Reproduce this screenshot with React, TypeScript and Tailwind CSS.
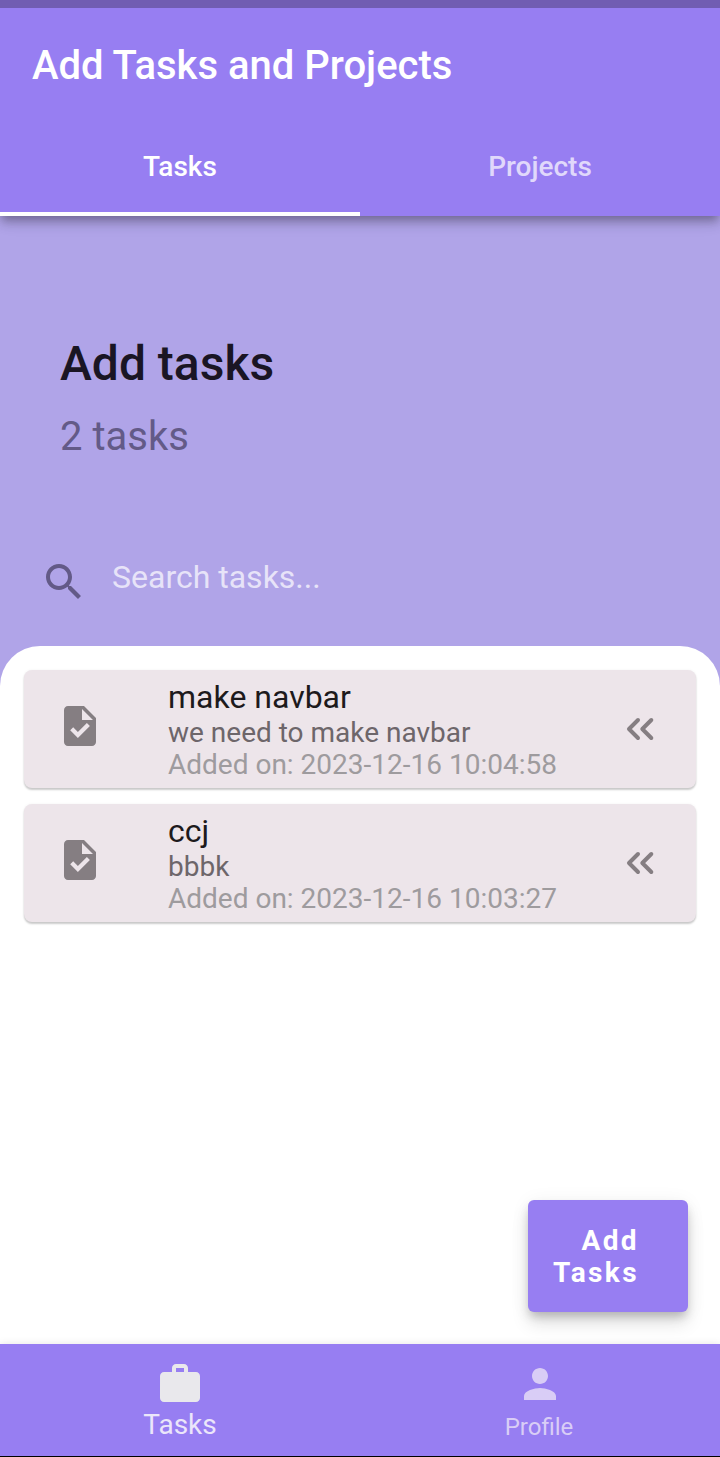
const PATHS = {
  search:
    "M15.5 14h-.79l-.28-.27C15.41 12.59 16 11.11 16 9.5 16 5.91 13.09 3 9.5 3S3 5.91 3 9.5 5.91 16 9.5 16c1.61 0 3.09-.59 4.23-1.57l.27.28v.79l5 4.99L20.49 19l-4.99-5zm-6 0C7.01 14 5 11.99 5 9.5S7.01 5 9.5 5 14 7.01 14 9.5 11.99 14 9.5 14z",
  task:
    "M14 2H6c-1.1 0-1.99.9-1.99 2L4 20c0 1.1.89 2 1.99 2H18c1.1 0 2-.9 2-2V8l-6-6zm-3.06 16L7.1 14.16l1.5-1.5 2.34 2.34 4.5-4.5 1.5 1.5L10.94 18zM13 9V3.5L18.5 9H13z",
  work:
    "M20 6h-4V4c0-1.11-.89-2-2-2h-4c-1.11 0-2 .89-2 2v2H4c-1.11 0-1.99.89-1.99 2L2 19c0 1.11.89 2 2 2h16c1.11 0 2-.89 2-2V8c0-1.11-.89-2-2-2zm-6 0h-4V4h4v2z",
  person:
    "M12 12c2.21 0 4-1.79 4-4s-1.79-4-4-4-4 1.79-4 4 1.79 4 4 4zm0 2c-2.67 0-8 1.34-8 4v2h16v-2c0-2.66-5.33-4-8-4z",
};

function Icon({ name, className }: { name: keyof typeof PATHS; className?: string }) {
  return (
    <svg viewBox="0 0 24 24" fill="currentColor" className={`size-12 shrink-0 ${className ?? ""}`}>
      <path d={PATHS[name]} />
    </svg>
  );
}

function DoubleChevron() {
  return (
    <svg
      viewBox="0 0 48 48"
      fill="none"
      stroke="currentColor"
      strokeWidth="4"
      strokeLinecap="round"
      strokeLinejoin="round"
      className="mt-[35px] size-12 shrink-0 text-[#857e82]"
    >
      <path d="M22 15l-9 9 9 9M35.300 15l-9 9 9 9" />
    </svg>
  );
}

const tasks = [
  { title: "make navbar", note: "we need to make navbar", date: "2023-12-16 10:04:58" },
  { title: "ccj", note: "bbbk", date: "2023-12-16 10:03:27" },
];

export default function App() {
  return (
    <div className="flex h-[1457px] w-[720px] flex-col overflow-hidden bg-[#b0a4e8] font-['Roboto',sans-serif]">
      <div className="z-20 h-2 shrink-0 bg-[#715db2]" />
      <header className="z-10 flex h-52 shrink-0 flex-col bg-[#977ef2] text-white shadow-[0_6px_8px_-3px_rgba(0,0,0,0.22),0_8px_10px_0_rgba(0,0,0,0.13),0_2px_20px_0_rgba(0,0,0,0.1)]">
        <h1 className="flex h-28 items-center pt-1 pl-8 text-[40px] font-medium">Add Tasks and Projects</h1>
        <nav className="grid h-24 grid-cols-2 text-[28px] font-medium">
          <div className="flex items-center justify-center border-b-4 border-white pt-0.5">Tasks</div>
          <div className="flex items-center justify-center pb-0.5 text-[#e0d8fb]">Projects</div>
        </nav>
      </header>

      <section className="flex h-[430px] shrink-0 flex-col pt-[119px]">
        <h2 className="pl-[60px] text-[48px] leading-[58px] font-medium text-[#1a1524]">Add tasks</h2>
        <p className="mt-[19px] pl-[60px] text-[40px] leading-[50px] text-[#635a87]">2 tasks</p>
        <div className="mt-24 flex pl-10">
          <Icon name="search" className="text-[#635a87]" />
          <span className="ml-6 text-[32px] leading-[38px] text-[#e7e3f8]">Search tasks...</span>
        </div>
      </section>

      <main className="flex min-h-0 flex-1 flex-col bg-[#b0a4e8]">
        <div className="flex flex-1 flex-col gap-4 rounded-t-[40px] bg-white px-6 pt-6">
          {tasks.map((t) => (
            <article
              key={t.title}
              className="flex h-[118px] shrink-0 rounded-lg bg-[#ede5ea] pr-8 pl-8 shadow-[0_2px_2px_rgba(0,0,0,0.2),0_0_3px_rgba(0,0,0,0.05)]"
            >
              <Icon name="task" className="mt-8 text-[#857e82]" />
              <div className="ml-16 flex-1 pt-2">
                <h3 className="text-[32px] leading-[38px] text-[#1d1a1c]">{t.title}</h3>
                <p className="mt-px text-[28px] leading-8 text-[#6d666a]">{t.note}</p>
                <p className="text-[28px] leading-8 text-[#9e9b9e]">Added on: {t.date}</p>
              </div>
              <DoubleChevron />
            </article>
          ))}
          <button className="mt-auto mr-2 mb-8 flex h-28 w-40 flex-col self-end rounded-md bg-[#977ef2] pt-[25px] pr-[49px] text-right text-[28px] leading-8 font-bold tracking-[2.4px] text-white shadow-[0_6px_10px_-2px_rgba(0,0,0,0.2),0_12px_18px_0_rgba(0,0,0,0.11),0_2px_20px_0_rgba(0,0,0,0.06)]">
            <span className="w-full">Add</span>
            <span className="w-full">Tasks</span>
          </button>
        </div>
      </main>

      <footer className="grid h-28 shrink-0 grid-cols-2 bg-[#977ef2] pt-4 shadow-[0_0_8px_rgba(0,0,0,0.1)]">
        <div className="flex flex-col items-center text-[#ebe6fa]">
          <Icon name="work" className="text-[#e9e8ec]" />
          <span className="mt-px text-[28px] leading-8">Tasks</span>
        </div>
        <div className="flex flex-col items-center text-[#d9cdf6]">
          <Icon name="person" />
          <span className="mt-[5px] pr-0.5 text-[24px] leading-7">Profile</span>
        </div>
      </footer>
      <div className="z-10 h-px shrink-0 bg-black" />
    </div>
  );
}
